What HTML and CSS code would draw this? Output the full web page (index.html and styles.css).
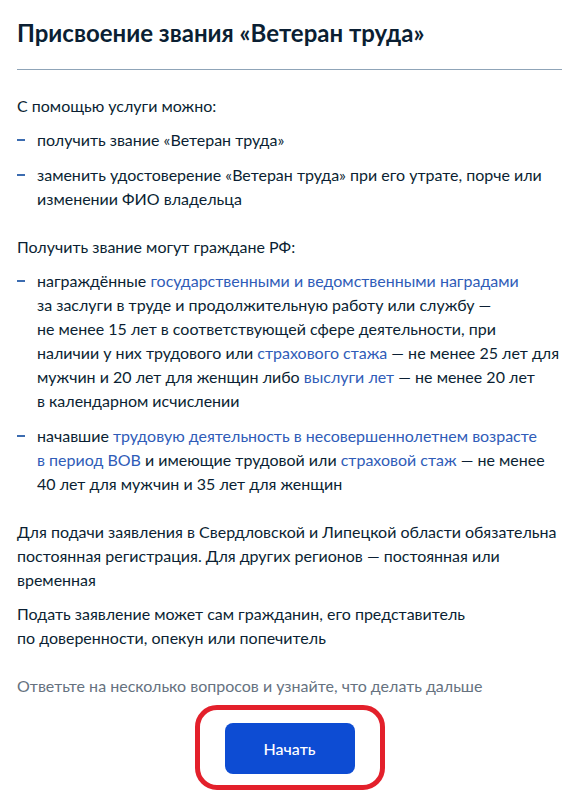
FILE: index.html
```html
<!DOCTYPE html>
<html lang="ru">
<head>
<meta charset="utf-8">
<link rel="stylesheet" href="styles.css">
</head>
<body>
<main class="page">
  <h1 class="title">Присвоение звания «Ветеран труда»</h1>
  <hr class="divider">
  <section class="section">
    <p class="text">С помощью услуги можно:</p>
    <ul class="list">
      <li>получить звание «Ветеран труда»</li>
      <li>заменить удостоверение «Ветеран труда» при его утрате, порче или<br>изменении ФИО владельца</li>
    </ul>
  </section>
  <section class="section">
    <p class="text">Получить звание могут граждане РФ:</p>
    <ul class="list">
      <li>награждённые <a class="link" href="#">государственными и ведомственными наградами</a><br>за заслуги в труде и продолжительную работу или службу —<br>не менее 15 лет в соответствующей сфере деятельности, при<br>наличии у них трудового или <a class="link" href="#">страхового стажа</a> — не менее 25 лет для<br>мужчин и 20 лет для женщин либо <a class="link" href="#">выслуги лет</a> — не менее 20 лет<br>в календарном исчислении</li>
      <li>начавшие <a class="link" href="#">трудовую деятельность в несовершеннолетнем возрасте<br>в период ВОВ</a> и имеющие трудовой или <a class="link" href="#">страховой стаж</a> — не менее<br>40 лет для мужчин и 35 лет для женщин</li>
    </ul>
  </section>
  <section class="section">
    <p class="text">Для подачи заявления в Свердловской и Липецкой области обязательна<br>постоянная регистрация. Для других регионов — постоянная или<br>временная</p>
    <p class="text">Подать заявление может сам гражданин, его представитель<br>по доверенности, опекун или попечитель</p>
  </section>
  <section class="section">
    <p class="text muted">Ответьте на несколько вопросов и узнайте, что делать дальше</p>
  </section>
  <div class="actions">
    <div class="highlight">
      <button class="btn" type="button">Начать</button>
    </div>
  </div>
</main>
</body>
</html>
```

FILE: styles.css
```css
* { box-sizing: border-box; }
html, body { margin: 0; padding: 0; background: #fff; }
body {
  font-family: Lato, "Noto Sans", "Liberation Sans", sans-serif;
  color: #0b1f33;
}
.page {
  padding: 17px 22px 0 17px;
}
.title {
  margin: 0;
  font-size: 24px;
  line-height: 32px;
  font-weight: 700;
  color: #0b1f33;
}
.divider {
  margin: 20px 0 0 0;
  border: 0;
  height: 1px;
  background: #8fa4b8;
}
.section {
  display: flex;
  flex-direction: column;
  gap: 10px;
  margin-top: 24px;
}
.text {
  margin: 0;
  font-size: 16px;
  line-height: 24px;
  white-space: nowrap;
}
.muted { color: #66727f; }
.list {
  margin: 0;
  padding: 0;
  list-style: none;
  display: flex;
  flex-direction: column;
  gap: 11px;
}
.list li {
  position: relative;
  padding-left: 20px;
  font-size: 16px;
  line-height: 24px;
  white-space: nowrap;
}
.list li::before {
  content: "";
  position: absolute;
  left: 0;
  top: 11px;
  width: 8px;
  height: 2px;
  background: #3c6cb0;
}
.link {
  color: #2f5cb8;
  text-decoration: none;
}
.actions {
  display: flex;
  justify-content: center;
  margin-top: 7px;
}
.highlight {
  border: 5px solid #e3202b;
  border-radius: 22px;
  padding: 13px 25px 11px 25px;
}
.btn {
  width: 130px;
  height: 51px;
  border: 0;
  border-radius: 8px;
  background: #0d4cd3;
  color: #fff;
  font-family: Lato, "Noto Sans", sans-serif;
  font-size: 16px;
  font-weight: 500;
  cursor: pointer;
}
```
